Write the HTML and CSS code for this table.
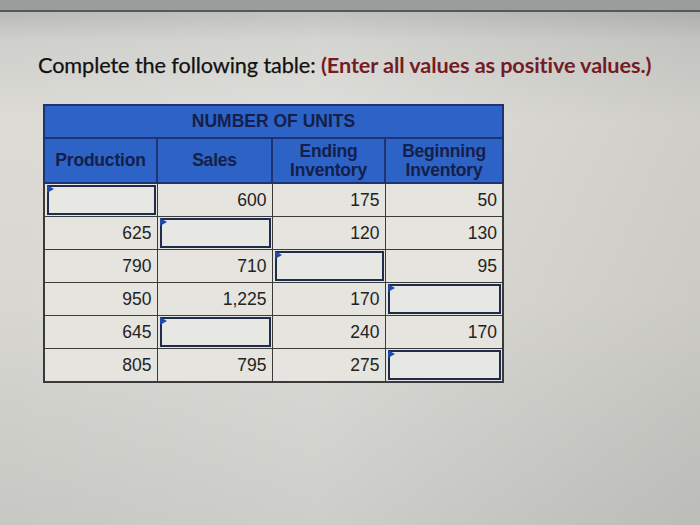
FILE: index.html
```html
<!DOCTYPE html>
<html>
<head>
<meta charset="utf-8">
<link rel="stylesheet" href="styles.css">
</head>
<body>
<div class="screen">
  <div class="topbar"></div>
  <div class="content">
    <h1 class="title">Complete the following table: <span class="note">(Enter all values as positive values.)</span></h1>
    <table class="units">
      <colgroup>
        <col class="c1"><col class="c2"><col class="c3"><col class="c4">
      </colgroup>
      <thead>
        <tr class="hrow1"><th colspan="4">NUMBER OF UNITS</th></tr>
        <tr class="hrow2">
          <th>Production</th>
          <th>Sales</th>
          <th>Ending<br>Inventory</th>
          <th>Beginning<br>Inventory</th>
        </tr>
      </thead>
      <tbody>
        <tr>
          <td class="input"><div class="box"><span class="flag"></span></div></td>
          <td>600</td><td>175</td><td>50</td>
        </tr>
        <tr>
          <td>625</td>
          <td class="input"><div class="box"><span class="flag"></span></div></td>
          <td>120</td><td>130</td>
        </tr>
        <tr>
          <td>790</td><td>710</td>
          <td class="input"><div class="box"><span class="flag"></span></div></td>
          <td>95</td>
        </tr>
        <tr>
          <td>950</td><td>1,225</td><td>170</td>
          <td class="input"><div class="box"><span class="flag"></span></div></td>
        </tr>
        <tr>
          <td>645</td>
          <td class="input"><div class="box"><span class="flag"></span></div></td>
          <td>240</td><td>170</td>
        </tr>
        <tr>
          <td>805</td><td>795</td><td>275</td>
          <td class="input"><div class="box"><span class="flag"></span></div></td>
        </tr>
      </tbody>
    </table>
  </div>
</div>
</body>
</html>
```

FILE: styles.css
```css
html, body {
  margin: 0;
  padding: 0;
}

.screen {
  width: 700px;
  height: 525px;
  overflow: hidden;
  background:
    linear-gradient(90deg, rgba(255,255,255,0.0) 0%, rgba(255,255,255,0.12) 45%, rgba(0,0,0,0.06) 100%),
    linear-gradient(180deg, #b0b0ae 0px, #cfcfcb 40px, #dcdbd6 120px, #d8d7d2 300px, #c7c7c3 524px);
  font-family: "Liberation Sans", Arial, sans-serif;
}

.topbar {
  height: 10px;
  background: #9a9d9c;
  border-bottom: 2px solid #555857;
}

.content {
  padding: 40px 0 0 38px;
}

.title {
  margin: 0;
  font-family: Lato, "Liberation Sans", sans-serif;
  font-size: 21.7px;
  font-weight: 400;
  color: #111111;
  line-height: 26px;
  letter-spacing: -0.1px;
  -webkit-text-stroke: 0.25px #111111;
}

.note {
  font-weight: 700;
  color: #741c26;
  -webkit-text-stroke: 0;
}

.units {
  margin: 26px 0 0 5px;
  border-collapse: collapse;
  table-layout: fixed;
  width: 459px;
  background: #e5e4df;
  border: 2px solid #3a3a3c;
}

.c1 { width: 113px; }
.c2 { width: 115px; }
.c3 { width: 113px; }
.c4 { width: 118px; }

.units th {
  background: #2d62c6;
  color: #14204a;
  font-weight: 700;
  font-size: 17.5px;
  letter-spacing: -0.2px;
  line-height: 19px;
  border: 2px solid #1d3372;
  padding: 0;
  text-align: center;
}

.hrow1 th {
  height: 31px;
  letter-spacing: 0;
}

.hrow2 th {
  height: 43px;
}

.units td {
  height: 32px;
  box-sizing: border-box;
  padding: 0 5px 0 0;
  border: 1px solid #3b3b3b;
  text-align: right;
  font-size: 17.5px;
  line-height: 20px;
  color: #232323;
  vertical-align: middle;
}

.units td.input {
  padding: 0;
  position: relative;
}

.box {
  position: relative;
  height: 26px;
  margin: 1px 1px 1px 2px;
  border: 2px solid #1f2c4c;
  background: #e7e7e3;
}

.flag {
  position: absolute;
  left: -2px;
  top: -2px;
  width: 0;
  height: 0;
  border-top: 4px solid transparent;
  border-bottom: 4px solid transparent;
  border-left: 7px solid #1f4aa8;
}
```
